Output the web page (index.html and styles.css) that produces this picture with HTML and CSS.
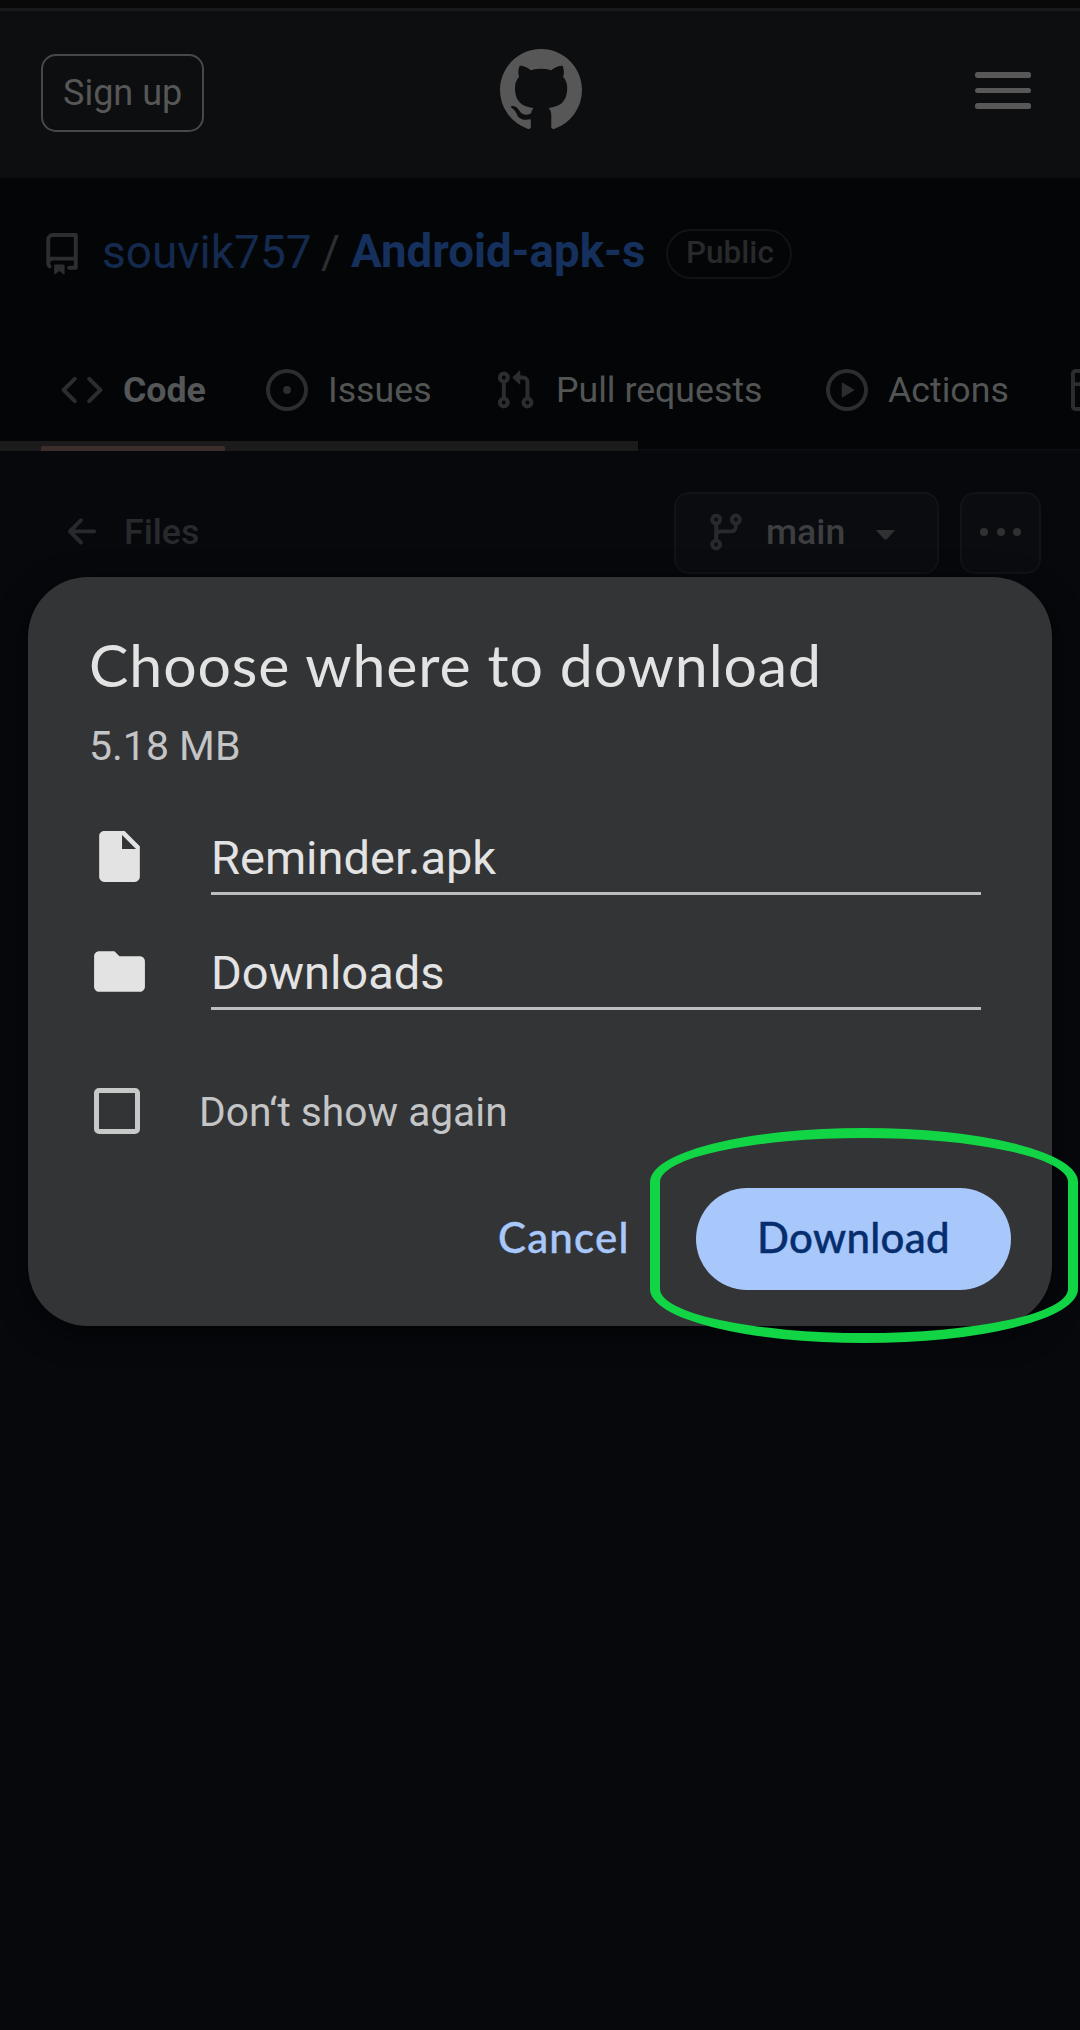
FILE: index.html
```html
<!DOCTYPE html>
<html lang="en">
<head>
<meta charset="utf-8">
<title>souvik757/Android-apk-s</title>
<link rel="stylesheet" href="styles.css">
</head>
<body>
<div class="page">
  <header class="topbar">
    <a class="signup"><span>Sign up</span></a>
    <svg class="logo" viewBox="0 0 16 16" fill="currentColor"><path d="M8 0c4.42 0 8 3.58 8 8a8.013 8.013 0 0 1-5.45 7.59c-.4.08-.55-.17-.55-.38 0-.27.01-1.13.01-2.2 0-.75-.25-1.23-.54-1.48 1.78-.2 3.65-.88 3.65-3.95 0-.88-.31-1.59-.82-2.15.08-.2.36-1.02-.08-2.12 0 0-.67-.22-2.2.82-.64-.18-1.32-.27-2-.27-.68 0-1.36.09-2 .27-1.53-1.03-2.2-.82-2.2-.82-.44 1.1-.16 1.92-.08 2.12-.51.56-.82 1.28-.82 2.15 0 3.06 1.86 3.75 3.64 3.95-.23.2-.44.55-.51 1.07-.46.21-1.61.55-2.33-.66-.15-.24-.6-.83-1.23-.82-.67.01-.27.38.01.53.34.19.73.9.82 1.13.16.45.68 1.31 2.69.94 0 .67.01 1.3.01 1.49 0 .21-.15.45-.55.38A7.995 7.995 0 0 1 0 8c0-4.42 3.58-8 8-8Z"/></svg>
    <div class="menu"><i></i><i></i><i></i></div>
  </header>

  <section class="repo">
    <div class="repo-title">
      <svg class="icon" viewBox="0 0 16 16" fill="currentColor"><path d="M2 2.5A2.5 2.5 0 0 1 4.5 0h8.75a.75.75 0 0 1 .75.75v12.5a.75.75 0 0 1-.75.75h-2.5a.75.75 0 0 1 0-1.5h1.75v-2h-8a1 1 0 0 0-.714 1.7.75.75 0 1 1-1.072 1.05A2.495 2.495 0 0 1 2 11.5Zm10.5-1h-8a1 1 0 0 0-1 1v6.708A2.486 2.486 0 0 1 4.5 9h8ZM5 12.25a.25.25 0 0 1 .25-.25h3.5a.25.25 0 0 1 .25.25v3.25a.25.25 0 0 1-.4.2l-1.45-1.087a.249.249 0 0 0-.3 0L5.4 15.7a.25.25 0 0 1-.4-.2Z"/></svg>
      <a class="owner">souvik757</a>
      <span class="slash">/</span>
      <a class="name">Android-apk-s</a>
      <span class="badge">Public</span>
    </div>
    <nav class="tabs">
      <a class="tab tab-code">
        <svg class="icon" viewBox="0 0 16 16" fill="currentColor"><path d="m11.28 3.22 4.25 4.25a.75.75 0 0 1 0 1.06l-4.25 4.25a.749.749 0 0 1-1.275-.326.749.749 0 0 1 .215-.734L13.94 8l-3.72-3.72a.749.749 0 0 1 .326-1.275.749.749 0 0 1 .734.215Zm-6.56 0a.751.751 0 0 1 1.042.018.751.751 0 0 1 .018 1.042L2.06 8l3.72 3.72a.749.749 0 0 1-.326 1.275.749.749 0 0 1-.734-.215L.47 8.53a.75.75 0 0 1 0-1.06Z"/></svg>
        <span>Code</span></a>
      <a class="tab tab-issues">
        <svg class="icon" viewBox="0 0 16 16" fill="currentColor"><path d="M8 9.5a1.5 1.5 0 1 0 0-3 1.5 1.5 0 0 0 0 3Z"/><path d="M8 0a8 8 0 1 1 0 16A8 8 0 0 1 8 0ZM1.5 8a6.5 6.5 0 1 0 13 0 6.5 6.5 0 0 0-13 0Z"/></svg>
        <span>Issues</span></a>
      <a class="tab tab-pulls">
        <svg class="icon" viewBox="0 0 16 16" fill="currentColor"><path d="M1.5 3.25a2.25 2.25 0 1 1 3 2.122v5.256a2.251 2.251 0 1 1-1.5 0V5.372A2.25 2.25 0 0 1 1.5 3.25Zm5.677-.177L9.573.677A.25.25 0 0 1 10 .854V2.5h1A2.5 2.5 0 0 1 13.5 5v5.628a2.251 2.251 0 1 1-1.5 0V5a1 1 0 0 0-1-1h-1v1.646a.25.25 0 0 1-.427.177L7.177 3.427a.25.25 0 0 1 0-.354ZM3.75 2.5a.75.75 0 1 0 0 1.5.75.75 0 0 0 0-1.5Zm0 9.5a.75.75 0 1 0 0 1.5.75.75 0 0 0 0-1.5Zm8.25.75a.75.75 0 1 0 1.5 0 .75.75 0 0 0-1.5 0Z"/></svg>
        <span>Pull requests</span></a>
      <a class="tab tab-actions">
        <svg class="icon" viewBox="0 0 16 16" fill="currentColor"><path d="M8 0a8 8 0 1 1 0 16A8 8 0 0 1 8 0ZM1.5 8a6.5 6.5 0 1 0 13 0 6.5 6.5 0 0 0-13 0Zm4.879-2.773 4.264 2.559a.25.25 0 0 1 0 .428l-4.264 2.559A.25.25 0 0 1 6 10.559V5.442a.25.25 0 0 1 .379-.215Z"/></svg>
        <span>Actions</span></a>
      <a class="tab tab-projects">
        <svg class="icon" viewBox="0 0 16 16" fill="currentColor"><path d="M0 1.75C0 .784.784 0 1.75 0h12.5C15.216 0 16 .784 16 1.75v12.5A1.75 1.75 0 0 1 14.25 16H1.75A1.75 1.75 0 0 1 0 14.25ZM6.5 6.5v8h7.75a.25.25 0 0 0 .25-.25V6.5Zm8-1.5V1.75a.25.25 0 0 0-.25-.25H6.5V5Zm-13 1.5v7.75c0 .138.112.25.25.25H5v-8ZM5 5V1.5H1.75a.25.25 0 0 0-.25.25V5Z"/></svg></a>
    </nav>
    <div class="scrollbar"><div class="thumb"><div class="current"></div></div></div>
  </section>

  <section class="files">
    <a class="back">
      <svg class="icon" viewBox="0 0 16 16" fill="currentColor"><path d="M7.78 12.53a.75.75 0 0 1-1.06 0L2.47 8.28a.75.75 0 0 1 0-1.06l4.25-4.25a.751.751 0 0 1 1.042.018.751.751 0 0 1 .018 1.042L4.81 7h7.44a.75.75 0 0 1 0 1.5H4.81l2.97 2.97a.75.75 0 0 1 0 1.06Z"/></svg>
      <span>Files</span></a>
    <div class="branch">
      <svg class="icon" viewBox="0 0 16 16" fill="currentColor"><path d="M9.5 3.25a2.25 2.25 0 1 1 3 2.122V6A2.5 2.5 0 0 1 10 8.5H6a1 1 0 0 0-1 1v1.128a2.251 2.251 0 1 1-1.5 0V5.372a2.25 2.25 0 1 1 1.5 0v1.836A2.493 2.493 0 0 1 6 7h4a1 1 0 0 0 1-1v-.628A2.25 2.25 0 0 1 9.500 3.250Zm-6 0a.75.75 0 1 0 1.500 0 .75.75 0 0 0-1.500 0Zm8.250-.75a.75.75 0 1 0 0 1.500.75.75 0 0 0 0-1.500ZM4.250 12a.75.75 0 1 0 0 1.500.75.75 0 0 0 0-1.500Z"/></svg>
      <span>main</span>
      <svg class="caret" viewBox="0 0 19 10" fill="currentColor"><path d="M1 0h17q1.200 0 .4 1l-8 8.400q-.9.900-1.800 0l-8-8.400q-.8-1 .4-1z"/></svg>
    </div>
    <div class="more"><i></i><i></i><i></i></div>
  </section>

  <div class="dialog">
    <h1>Choose where to download</h1>
    <p class="size">5.18 MB</p>
    <div class="field">
      <svg viewBox="0 0 24 24" fill="currentColor"><path d="M6 2c-1.100 0-2 .9-2 2v16c0 1.100.9 2 2 2h12c1.100 0 2-.9 2-2V8l-6-6zm7 7V3.500L18.500 9z"/></svg>
      <div class="input">Reminder.apk</div>
    </div>
    <div class="field">
      <svg viewBox="0 0 24 24" fill="currentColor"><path d="M10 4H4c-1.100 0-1.990.9-1.990 2L2 18c0 1.100.9 2 2 2h16c1.100 0 2-.9 2-2V8c0-1.100-.9-2-2-2h-8z"/></svg>
      <div class="input">Downloads</div>
    </div>
    <label class="again"><span class="box"></span><span>Don‘t show again</span></label>
    <div class="actions">
      <span class="cancel">Cancel</span>
      <span class="download">Download</span>
    </div>
  </div>
  <div class="highlight"></div>
</div>
</body>
</html>
```
FILE: styles.css
```css
* { box-sizing: border-box; }
body { margin: 0; background: #06080c; }
.page {
  position: relative;
  width: 1080px;
  height: 2030px;
  overflow: hidden;
  background: #06080c;
  font-family: Roboto, "Liberation Sans", sans-serif;
  font-size: 35.700px;
  white-space: nowrap;
}
.icon { width: 42px; height: 42px; flex: none; display: block; }

.topbar {
  height: 178px;
  padding: 0 49px 0 41px;
  border-top: 8px solid #090909;
  box-shadow: inset 0 3px #1a1a1a;
  background: #0d0e10;
  color: #575757;
  display: grid;
  grid-template-columns: 1fr auto 1fr;
}
.signup {
  width: 163px;
  height: 78px;
  margin-top: 46px;
  padding-left: 20px;
  border: 2px solid #484849;
  border-radius: 15px;
  line-height: 74px;
  font-size: 36px;
}
.logo { width: 82px; height: 82px; margin: 41px -5px 0 5px; }
.menu { justify-self: end; width: 56px; margin-top: 64px; display: flex; flex-direction: column; gap: 10px; }
.menu i { height: 5.500px; border-radius: 2.500px; background: #585858; }

.repo { height: 273px; background: #030507; display: flex; flex-direction: column; }
.repo-title {
  height: 150px;
  padding: 51px 0 0 41px;
  display: flex;
  align-items: flex-start;
  line-height: 46px;
  font-size: 46px;
  color: #2d2e30;
}
.repo-title .icon { margin-top: 4px; }
.owner { margin-left: 19px; width: 219px; color: #142a4f; }
.slash { width: 30px; }
.name { width: 315px; font-size: 45.600px; font-weight: 700; color: #15305c; }
.badge {
  width: 126px;
  height: 50px;
  padding-left: 18px;
  border: 2px solid #111315;
  border-radius: 25px;
  font-size: 31.500px;
  font-weight: 500;
  line-height: 43px;
  color: #28292b;
}
.tabs { height: 113px; display: flex; padding: 41px 0 0 61px; color: #2c2d2f; }
.tab { display: flex; gap: 20px; height: 42px; line-height: 42px; flex: none; }
.tab span { color: #535454; }
.tab-code { width: 205px; }
.tab-code span { font-weight: 700; color: #555657; }
.tab-issues { width: 228px; }
.tab-pulls { width: 332px; }
.tab-actions { width: 245px; }
.scrollbar { height: 10px; box-shadow: inset 0 -2px #0a0c0f; }
.thumb { width: 638px; height: 10px; padding: 5px 0 0 41px; background: #1b1b1c; }
.current { width: 184px; height: 5px; background: #3e2e2b; border-radius: 2px 2px 0 0; }

.files { display: flex; padding: 41px 39px 0 62px; font-weight: 500; color: #28292c; }
.back { display: flex; gap: 20px; margin-right: auto; height: 80px; align-items: center; }
.branch, .more {
  height: 82px;
  padding-bottom: 2px;
  border: 2px solid #111316;
  border-radius: 15px;
  background: #0a0c10;
  display: flex;
  align-items: center;
}
.branch { width: 265px; padding-left: 29px; margin-right: 21px; }
.branch span { width: 110px; margin-left: 19px; color: #3d3e40; }
.caret { width: 19px; height: 10px; margin-top: 6px; color: #303133; }
.more { width: 81px; justify-content: center; gap: 8.500px; }
.more i { width: 8px; height: 8px; border-radius: 50%; background: #303133; }

.dialog {
  position: absolute;
  left: 28px;
  top: 577px;
  width: 1024px;
  height: 749px;
  padding: 54px 41px 0 61px;
  border-radius: 60px;
  background: #333436;
  box-shadow: 0 8px 30px rgba(0, 0, 0, .6);
  color: #e3e3e3;
}
.dialog h1 {
  margin: 0;
  height: 68px;
  font: 400 59px/67px Lato, sans-serif;
  letter-spacing: .9px;
}
.size { margin: 17px 0 0; height: 60px; line-height: 61px; font-size: 41px; color: #c4c5c6; }
.field { display: flex; height: 115px; }
.field svg { width: 61px; height: 61px; margin: 50px 61px 0 0; }
.input {
  width: 770px;
  height: 119px;
  border-bottom: 3px solid #bcbdbe;
  padding-top: 52px;
  line-height: 60px;
  font-size: 47px;
}
.again { display: flex; margin-top: 82px; height: 46px; color: #c4c5c6; font-size: 40.700px; line-height: 49px; }
.box { width: 46px; height: 46px; margin: 0 59px 0 5px; border: 5px solid #c7c8c8; border-radius: 5px; }
.actions {
  display: flex;
  justify-content: flex-end;
  margin-top: 54px;
  font: 500 42px/99px Lato, sans-serif;
  letter-spacing: .3px;
  color: #a8c7fa;
}
.cancel { width: 198px; letter-spacing: 1.200px; -webkit-text-stroke: .4px; }
.download {
  width: 315px;
  height: 102px;
  border-radius: 51px;
  background: #a8c7fa;
  color: #062e6f;
  text-align: center;
  -webkit-text-stroke: .4px;
}

.highlight {
  position: absolute;
  left: 650px;
  top: 1128px;
  width: 428px;
  height: 215px;
  border: 10px solid #12d545;
  border-radius: 214px / 54px;
}
```
